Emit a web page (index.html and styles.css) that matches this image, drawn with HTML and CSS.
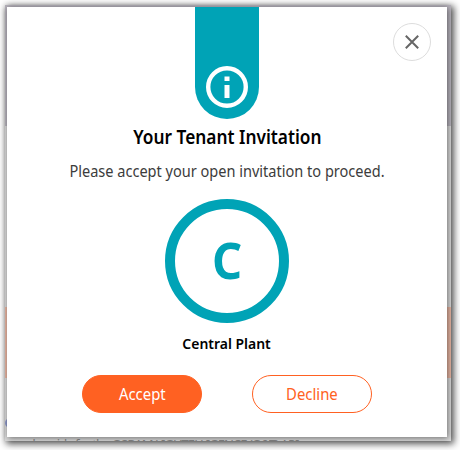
FILE: index.html
```html
<!DOCTYPE html>
<html lang="en">
<head>
<meta charset="utf-8">
<title>Your Tenant Invitation</title>
<link rel="stylesheet" href="styles.css">
</head>
<body>
<div class="frame">
  <div class="page">
    <div class="hero"></div>
    <div class="band"></div>
    <span class="dot"></span>
    <p class="page-text">needs guide for the OSRAM LIGHTELLIGENCE (O&amp;T) API</p>
  </div>
  <main class="modal">
    <div class="ribbon">
      <svg width="42" height="42" viewBox="0 0 42 42"><circle cx="21" cy="21" r="18.8" fill="none" stroke="#fff" stroke-width="4.4"/><path d="M18.5 10.5h5v4.5h-5zM18.5 19h5v13h-5z" fill="#fff"/></svg>
    </div>
    <button class="close" aria-label="Close"><svg width="14" height="14" viewBox="0 0 14 14"><path d="M.8.8l12.4 12.4M13.2.8L.8 13.2" stroke="#666" stroke-width="2"/></svg></button>
    <h1 class="title"><span>Your Tenant Invitation</span></h1>
    <p class="message"><span>Please accept your open invitation to proceed.</span></p>
    <div class="avatar"><span>C</span></div>
    <p class="tenant"><span>Central Plant</span></p>
    <div class="actions">
      <button class="button primary"><span>Accept</span></button>
      <button class="button"><span>Decline</span></button>
    </div>
  </main>
</div>
</body>
</html>
```
FILE: styles.css
```css
* { box-sizing: border-box; }
body {
  margin: 0;
  padding: 5px;
  height: 450px;
  overflow: hidden;
  background: #fff;
  font-family: "Noto Sans", "Open Sans", sans-serif;
}
.frame {
  position: relative;
  width: 446px;
  height: 436px;
  padding: 2px;
  box-shadow: 2px 2px 7px 1px rgba(0, 0, 0, .65);
}
.page {
  position: absolute;
  inset: 0;
  overflow: hidden;
  background: #d8d8d8;
}
.hero { height: 121px; background: #b6b2bb; }
.band { margin-top: 181px; height: 71px; background: #e7b5a2; }
.dot {
  position: absolute;
  left: 0;
  top: 413px;
  width: 10px;
  height: 10px;
  border: 2px solid #8c97c9;
  border-radius: 50%;
}
.page-text {
  position: absolute;
  left: 3px;
  top: 430px;
  margin: 0;
  font-size: 13px;
  line-height: 18px;
  letter-spacing: -.95px;
  white-space: nowrap;
  color: #888;
}
.modal {
  position: relative;
  display: flex;
  flex-direction: column;
  align-items: center;
  width: 440px;
  height: 430px;
  background: #fff;
  box-shadow: 1px 1px 6px rgba(0, 0, 0, .5);
}
.ribbon {
  display: flex;
  justify-content: center;
  align-items: flex-end;
  width: 64px;
  height: 112px;
  padding-bottom: 11px;
  border-radius: 0 0 32px 32px;
  background: #00a3b6;
}
.close {
  position: absolute;
  top: 16px;
  right: 16px;
  display: flex;
  align-items: center;
  justify-content: center;
  width: 38px;
  height: 38px;
  padding: 0;
  border: 1px solid #ddd;
  border-radius: 50%;
  background: #fff;
}
h1, p { margin: 0; white-space: nowrap; }
span { display: inline-block; }
.title {
  height: 36px;
  font-size: 19px;
  line-height: 36px;
  font-weight: 600;
  color: #000;
}
.title span { transform: scaleX(.91); }
.message {
  margin-top: 1px;
  height: 30px;
  font-size: 15.5px;
  line-height: 30px;
  color: #3c3c3c;
}
.message span { transform: scaleX(.938); }
.avatar {
  display: flex;
  align-items: center;
  justify-content: center;
  width: 124px;
  height: 124px;
  margin-top: 13px;
  padding-bottom: 2px;
  border: 10px solid #00a3b6;
  border-radius: 50%;
  color: #00a3b6;
  font-size: 50px;
  line-height: 60px;
  font-weight: 700;
}
.avatar span { transform: scaleX(.94); }
.tenant {
  margin-top: 8px;
  height: 24px;
  font-size: 15px;
  line-height: 24px;
  font-weight: 600;
  color: #000;
}
.tenant span { transform: scaleX(.93); }
.actions { display: flex; gap: 50px; margin-top: 20px; }
.button {
  width: 120px;
  height: 38px;
  padding: 0;
  border: 1px solid #ff6122;
  border-radius: 19px;
  background: #fff;
  color: #ff6122;
  font: 15.5px/36px "Noto Sans", "Open Sans", sans-serif;
}
.button span { transform: scaleX(.96); }
.primary { background: #ff6122; color: #fff; }
```
